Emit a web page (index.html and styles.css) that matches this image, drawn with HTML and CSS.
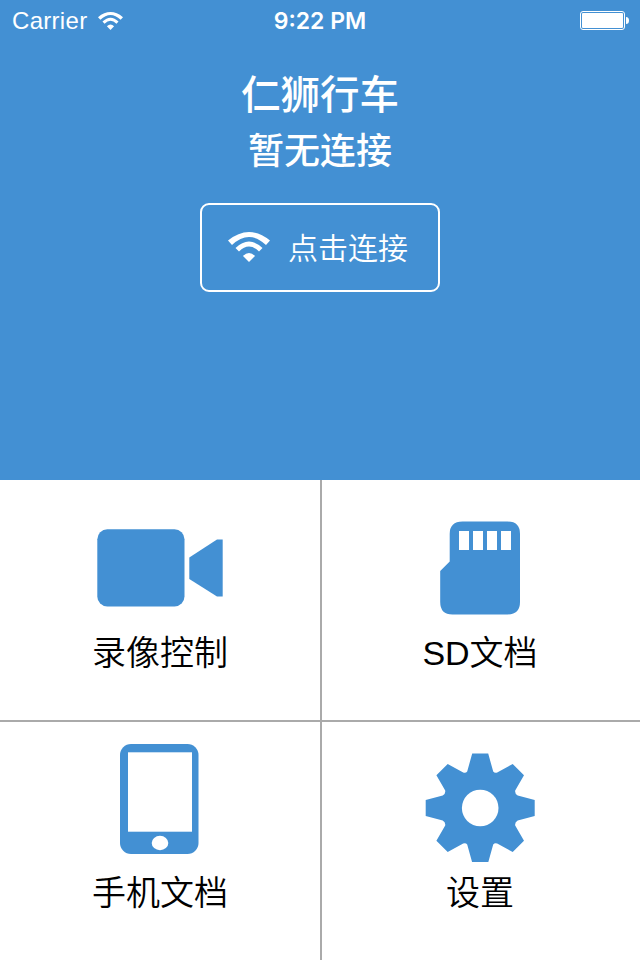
FILE: index.html
```html
<!DOCTYPE html>
<html lang="zh-CN">

<head>
    <meta charset="UTF-8">
    <meta name="viewport" content="width=device-width, initial-scale=1.0">
    <title>仁狮行车</title>
    <link rel="stylesheet" href="styles.css">
</head>

<body>
    <header class="hero">
        <div class="status-bar">
            <div class="carrier">
                <span>Carrier</span>
                <svg class="carrier-wifi" viewBox="0 0 42 30">
                    <path d="M0 8.5Q21 -8.5 42 8.5L38 13Q21 -3 4 13Z"/>
                    <path d="M7.5 16Q21 3 34.5 16L31 19.5Q21 9.5 11 19.5Z"/>
                    <path d="M15 24Q21 18 27 24L21 30Z"/>
                </svg>
            </div>
            <span class="clock">9:22 PM</span>
            <div class="battery">
                <svg width="50" height="20" viewBox="0 0 50 20">
                    <rect x="0.5" y="0.5" width="44" height="18" rx="2.5" fill="none" stroke="#fff"/>
                    <rect x="2" y="2" width="41" height="15" rx="1"/>
                    <path d="M46 6q3 0 3 3.5t-3 3.5z"/>
                </svg>
            </div>
        </div>
        <h1 class="title">仁狮行车</h1>
        <p class="state">暂无连接</p>
        <button class="connect" type="button">
            <svg class="connect-wifi" viewBox="0 0 42 30">
                <path d="M0 8.5Q21 -8.5 42 8.5L38 13Q21 -3 4 13Z"/>
                <path d="M7.5 16Q21 3 34.5 16L31 19.5Q21 9.5 11 19.5Z"/>
                <path d="M15 24Q21 18 27 24L21 30Z"/>
            </svg>
            <span class="connect-text">点击连接</span>
        </button>
    </header>

    <main class="menu">
        <div class="tile">
            <svg class="icon" viewBox="0 0 140 130">
                <rect x="7.3" y="37.3" width="87.2" height="77.2" rx="10"/>
                <path d="M99.3 65.5L127 47.5H132.7V104.5H127L99.3 87Z"/>
            </svg>
            <span class="label">录像控制</span>
        </div>
        <div class="tile tile-right">
            <svg class="icon" viewBox="0 0 140 130">
                <path fill-rule="evenodd" d="M52.5 29.5H97.5Q110 29.5 110 42V110Q110 122.5 97.5 122.5H42.5Q30.2 122.5 30.2 110V79L39.7 69.5V42Q39.7 29.5 52.5 29.5ZM49 39V58H59V39ZM63 39V58H73V39ZM77 39V58H87V39ZM91 39V58H101V39Z"/>
            </svg>
            <span class="label">SD文档</span>
        </div>
        <div class="tile tile-bottom">
            <svg class="icon" viewBox="0 0 140 130">
                <rect x="30" y="12" width="78.5" height="110" rx="11"/>
                <rect class="hole" x="38" y="20.3" width="64" height="79.4"/>
                <ellipse class="hole" cx="70" cy="111" rx="8.3" ry="7.2"/>
            </svg>
            <span class="label">手机文档</span>
        </div>
        <div class="tile tile-right tile-bottom">
            <svg class="icon" viewBox="0 0 140 130">
                <g transform="translate(70.2 76)">
                    <path d="M-8 -54.5H8L13 -36.5Q14.5 -34.5 17 -35.5L32.5 -44L43.8 -32.7L35 -17.5Q34.5 -14 37.5 -12.5L54.5 -8V8L37.5 12.5Q34.5 14 35 17.5L43.8 32.7L32.5 44L17 35.5Q14.5 34.5 13 36.5L8 54.5H-8L-13 36.5Q-14.5 34.5 -17 35.5L-32.5 44L-43.8 32.7L-35 17.5Q-34.5 14 -37.5 12.5L-54.5 8V-8L-37.5 -12.5Q-34.5 -14 -35 -17.5L-43.8 -32.7L-32.5 -44L-17 -35.5Q-14.5 -34.5 -13 -36.5Z"/>
                    <circle class="hole" r="18.3"/>
                </g>
            </svg>
            <span class="label">设置</span>
        </div>
    </main>
</body>

</html>
```

FILE: styles.css
```css
* {
    box-sizing: border-box;
}

body {
    width: 640px;
    height: 960px;
    margin: 0;
    background-color: #fff;
    font-family: "Liberation Sans", "Noto Sans CJK SC", sans-serif;
}

.hero {
    display: flex;
    flex-direction: column;
    align-items: center;
    height: 480px;
    background-color: #4390d3;
    color: #fff;
}

.hero svg {
    fill: #fff;
}

.status-bar {
    display: grid;
    grid-template-columns: 1fr auto 1fr;
    align-items: center;
    width: 100%;
    height: 41px;
    padding: 0 12px;
}

.carrier {
    display: flex;
    align-items: center;
    gap: 11px;
    font-size: 24px;
    letter-spacing: 0.3px;
}

.carrier-wifi {
    width: 25px;
    height: 18px;
}

.clock {
    font-family: Inter, sans-serif;
    font-size: 23px;
    font-weight: 600;
}

.battery {
    display: flex;
    justify-content: flex-end;
    margin-right: -2px;
}

.title {
    margin: 21px 0 0;
    font-family: "Noto Sans CJK SC", sans-serif;
    font-size: 39.5px;
    font-weight: 500;
    line-height: 60px;
}

.state {
    margin: 0;
    font-family: "Noto Sans CJK SC", sans-serif;
    font-size: 36px;
    font-weight: 500;
    line-height: 53px;
}

.connect {
    display: flex;
    align-items: center;
    gap: 18px;
    width: 240px;
    height: 89px;
    margin-top: 28px;
    padding: 0 0 0 26px;
    border: 2px solid #fff;
    border-radius: 9px;
    background: none;
    color: #fff;
    font-family: "Noto Sans CJK SC", sans-serif;
    font-size: 30px;
    font-weight: 350;
}

.connect-wifi {
    width: 42px;
    height: 30px;
    margin-bottom: 1px;
}

.connect-text {
    padding-bottom: 3px;
}

.menu {
    display: grid;
    grid-template-columns: 320px 320px;
    grid-template-rows: 240px 240px;
}

.tile {
    display: flex;
    flex-direction: column;
    align-items: center;
    padding-top: 12px;
}

.tile-right {
    padding-right: 2px;
    border-left: 2px solid #aaa;
}

.tile-bottom {
    padding-top: 10px;
    border-top: 2px solid #aaa;
}

.icon {
    width: 140px;
    height: 130px;
    fill: #4390d3;
}

.icon .hole {
    fill: #fff;
}

.label {
    margin-top: 11px;
    color: #000;
    font-size: 34px;
    font-weight: 350;
    line-height: 40px;
}
```
